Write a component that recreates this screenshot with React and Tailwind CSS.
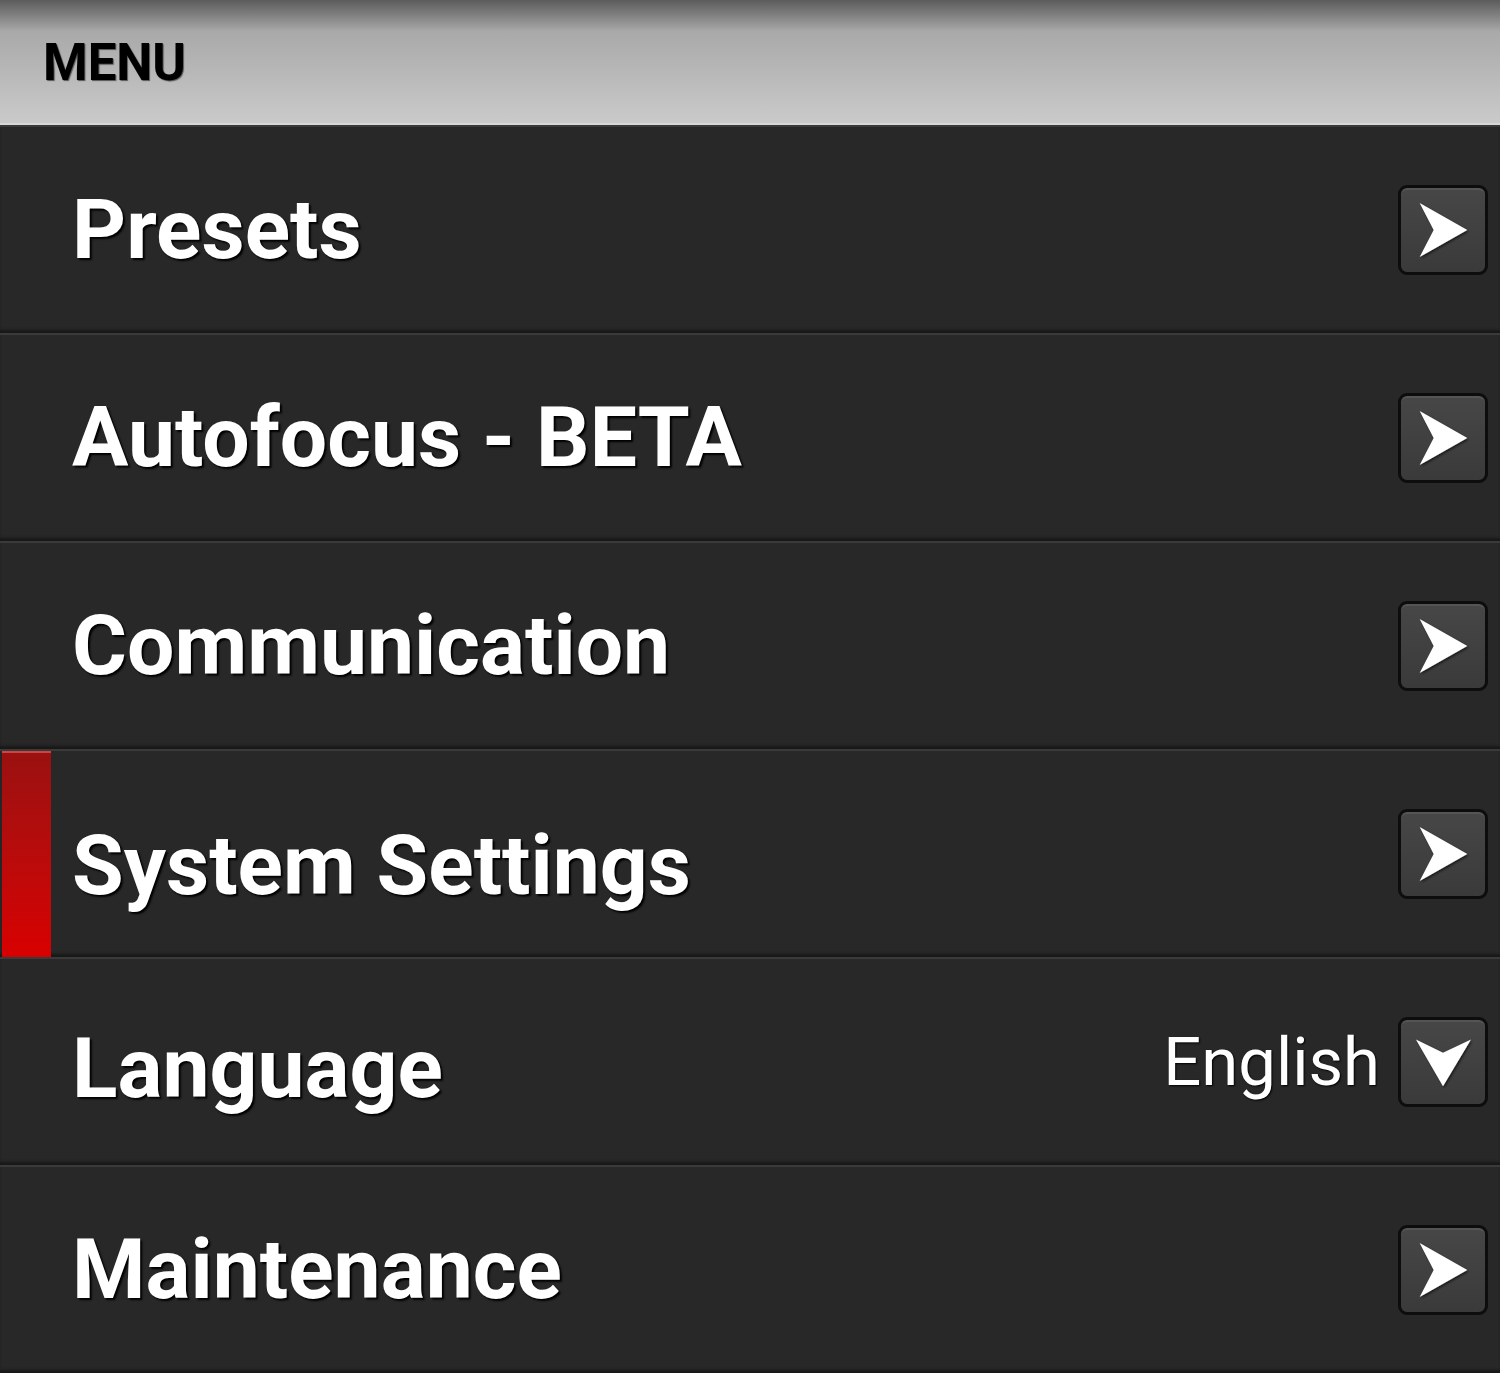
import React from "react";

const items = [
  { label: "Presets", kind: "arrow", shift: "pt-0" },
  { label: "Autofocus - BETA", kind: "arrow", shift: "pt-0" },
  { label: "Communication", kind: "arrow", shift: "pt-0" },
  { label: "System Settings", kind: "arrow", shift: "pt-[24px]", active: true },
  { label: "Language", kind: "select", value: "English", shift: "pt-[14px]" },
  { label: "Maintenance", kind: "arrow", shift: "pt-0" },
];

const ArrowIcon = ({ down }) => (
  <svg viewBox="0 0 90 90" className="h-full w-full">
    <defs>
      <filter id={down ? "shd" : "shr"} x="-20%" y="-20%" width="140%" height="140%">
        <feDropShadow dx="1.5" dy="1.5" stdDeviation="1.2" floodColor="#000" floodOpacity="0.6" />
      </filter>
    </defs>
    {down ? (
      <polygon points="16,21 45,35 75,21 45,71" fill="#fff" filter="url(#shd)" />
    ) : (
      <polygon points="20,16 71,45 20,74 35,45" fill="#fff" filter="url(#shr)" />
    )}
  </svg>
);

const SquareButton = ({ down }) => (
  <div className="h-[90px] w-[90px] shrink-0 overflow-hidden rounded-[9px] border-[3px] border-[#0d0d0d] bg-gradient-to-b from-[#474747] to-[#3a3a3a] shadow-[inset_0_2px_0_#555]">
    <ArrowIcon down={down} />
  </div>
);

const Row = ({ item }) => (
  <div className="relative flex h-[208px] items-center border-t-2 border-t-[#3a3a3a] bg-[#282828] shadow-[inset_0_-4px_3px_-1px_#181818]">
    {item.active ? (
      <div className="absolute bottom-0 left-[2px] top-0 w-[49px] bg-gradient-to-b from-[#9a1010] to-[#d80000] shadow-[inset_0_2px_0_#c44]" />
    ) : null}
    <div className={`flex-1 pl-[72px] ${item.shift}`}>
      <span className="text-[84px] font-bold leading-none text-white [text-shadow:2px_2px_2px_#000]">
        {item.label}
      </span>
    </div>
    <div className="flex items-center gap-[18px] pr-[12px]">
      {item.value ? (
        <span className="text-[67px] leading-none text-white [text-shadow:1px_1px_2px_#000]">
          {item.value}
        </span>
      ) : null}
      <SquareButton down={item.kind === "select"} />
    </div>
  </div>
);

export default function App() {
  return (
    <div className="w-[1500px] bg-[#1a1a1a] font-['Roboto',sans-serif]">
      <div className="flex h-[125px] items-center bg-gradient-to-b from-[#5c5c5c] via-[#a9a9a9] via-25% to-[#cbcbcb] pl-[43px] shadow-[inset_0_-2px_0_#d8d8d8]">
        <span className="text-[51px] font-bold leading-none text-black [text-shadow:1px_1px_1px_#555]">
          MENU
        </span>
      </div>
      {items.map((item) => (
        <Row key={item.label} item={item} />
      ))}
    </div>
  );
}
